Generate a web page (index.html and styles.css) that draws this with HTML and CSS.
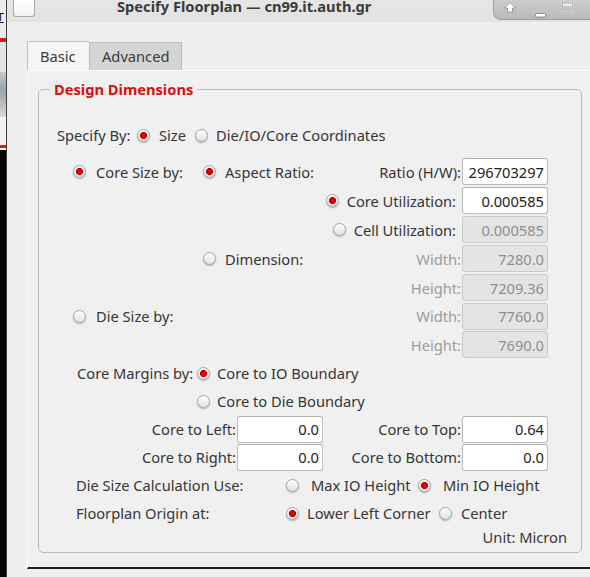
FILE: index.html
```html
<!DOCTYPE html>
<html>
<head>
<meta charset="utf-8">
<title>Specify Floorplan</title>
<link rel="stylesheet" href="styles.css">
</head>
<body>
<div class="screen">
  <div class="backwin">
    <div class="bw-top"><span class="bw-t">T</span></div>
    <div class="bw-red"></div>
    <div class="bw-gap"></div>
    <div class="bw-mid"></div>
    <div class="bw-light"></div>
    <div class="bw-dark"></div>
  </div>
  <div class="dialog">
    <div class="titlebar">
      <div class="tb-menu"></div>
      <div class="tb-title">Specify Floorplan — cn99.it.auth.gr</div>
      <div class="tb-buttons">
        <svg width="97" height="20" viewBox="0 0 97 20">
          <path d="M17 2.5 L22.5 8 L19.5 8 L19.5 12 L14.5 12 L14.5 8 L11.5 8 Z" fill="#fff" stroke="#8a8a8a" stroke-width="0.8" stroke-linejoin="round"/>
          <rect x="42.5" y="13.5" width="10" height="3.5" rx="1" fill="#fff" stroke="#777" stroke-width="0.8"/>
          <rect x="69.5" y="2.5" width="10" height="10" fill="none" stroke="#f4f4f4" stroke-width="1.6"/>
          <rect x="69.5" y="2.5" width="10" height="10" fill="none" stroke="#8a8a8a" stroke-width="0.6"/>
          <line x1="70" y1="5" x2="79" y2="5" stroke="#f4f4f4" stroke-width="1.4"/>
        </svg>
      </div>
    </div>
    <div class="body">
      <div class="tabs">
        <div class="tab active">Basic</div>
        <div class="tab">Advanced</div>
      </div>
      <div class="pane">
        <fieldset class="group">
          <legend>Design Dimensions</legend>

          <div class="row row-spec">
            <span class="spec-label">Specify By:</span>
            <span class="radio on"></span><span class="spec-size">Size</span>
            <span class="radio"></span><span class="spec-coord">Die/IO/Core Coordinates</span>
          </div>

          <div class="row row-dim h29">
            <span class="radio on"></span><span class="cellA">Core Size by:</span>
            <span class="radio on"></span><span class="cellB">Aspect Ratio:</span>
            <span class="flabel">Ratio (H/W):</span>
            <input class="field" type="text" value="296703297" readonly>
          </div>

          <div class="row row-dim h29">
            <span class="cellA-empty"></span>
            <span class="util"><span class="radio on"></span><span class="util-text">Core Utilization:</span></span>
            <input class="field" type="text" value="0.000585" readonly>
          </div>

          <div class="row row-dim h29">
            <span class="cellA-empty"></span>
            <span class="util"><span class="radio"></span><span class="util-text">Cell Utilization:</span></span>
            <input class="field" type="text" value="0.000585" disabled>
          </div>

          <div class="row row-dim h29">
            <span class="cellA-empty"></span>
            <span class="radio"></span><span class="cellB">Dimension:</span>
            <span class="flabel muted">Width:</span>
            <input class="field" type="text" value="7280.0" disabled>
          </div>

          <div class="row row-dim h29">
            <span class="cellA-empty"></span>
            <span class="cellB-empty"></span>
            <span class="flabel muted">Height:</span>
            <input class="field" type="text" value="7209.36" disabled>
          </div>

          <div class="row row-dim h28">
            <span class="radio"></span><span class="cellA">Die Size by:</span>
            <span class="cellB-empty"></span>
            <span class="flabel muted">Width:</span>
            <input class="field" type="text" value="7760.0" disabled>
          </div>

          <div class="row row-dim h29">
            <span class="cellA-empty"></span>
            <span class="cellB-empty"></span>
            <span class="flabel muted">Height:</span>
            <input class="field" type="text" value="7690.0" disabled>
          </div>

          <div class="row row-margin">
            <span class="margin-label">Core Margins by:</span>
            <span class="radio on"></span><span class="margin-opt">Core to IO Boundary</span>
          </div>

          <div class="row row-margin">
            <span class="margin-label"></span>
            <span class="radio"></span><span class="margin-opt">Core to Die Boundary</span>
          </div>

          <div class="row row-sides">
            <span class="side-label">Core to Left:</span>
            <input class="field" type="text" value="0.0" readonly>
            <span class="side-label2">Core to Top:</span>
            <input class="field" type="text" value="0.64" readonly>
          </div>

          <div class="row row-sides">
            <span class="side-label">Core to Right:</span>
            <input class="field" type="text" value="0.0" readonly>
            <span class="side-label2">Core to Bottom:</span>
            <input class="field" type="text" value="0.0" readonly>
          </div>

          <div class="row row-opt">
            <span class="opt-label">Die Size Calculation Use:</span>
            <span class="radio"></span><span class="opt-a1">Max IO Height</span>
            <span class="radio on"></span><span class="opt-b1">Min IO Height</span>
          </div>

          <div class="row row-opt">
            <span class="opt-label">Floorplan Origin at:</span>
            <span class="radio on"></span><span class="opt-a2">Lower Left Corner</span>
            <span class="radio"></span><span class="opt-b2">Center</span>
          </div>

          <div class="row row-unit">Unit: Micron</div>
        </fieldset>
      </div>
    </div>
  </div>
</div>
</body>
</html>
```

FILE: styles.css
```css
* { box-sizing: border-box; }
html, body { margin: 0; padding: 0; }
body {
  width: 590px;
  height: 577px;
  overflow: hidden;
  background: #efefef;
  font-family: "Noto Sans", "Open Sans", sans-serif;
  font-size: 11pt;
  color: #353535;
}
.screen { display: flex; height: 577px; }

/* window behind the dialog */
.backwin {
  width: 7px;
  flex: none;
  display: flex;
  flex-direction: column;
  border-right: 1px solid #3c3c3c;
  overflow: hidden;
}
.bw-top { height: 38px; background: #ebebeb; }
.bw-t {
  display: block;
  margin: 12px 0 0 -3px;
  font-family: "DejaVu Sans", sans-serif;
  font-size: 11px;
  line-height: 12px;
  color: #111;
  text-decoration: underline;
}
.bw-red { height: 4px; background: #cc1d1d; }
.bw-gap { height: 30px; background: #e4e4e4; }
.bw-mid { height: 45px; background: linear-gradient(#c4c8cc, #9aa3ad 40%, #d8d8d8); }
.bw-light { height: 33px; background: linear-gradient(#f2f2f2 85%, #cc2222 85%, #cc2222 95%, #ededed 95%); }
.bw-dark { flex: 1; background: #050505; }

.dialog { flex: 1; display: flex; flex-direction: column; min-width: 0; }

/* title bar */
.titlebar {
  height: 22px;
  flex: none;
  display: flex;
  align-items: flex-start;
  background: linear-gradient(#e6e6e6, #e2e2e2);
}
.tb-menu {
  width: 22px;
  height: 17px;
  margin-left: 6px;
  border: 1px solid #a8a8a8;
  border-top: none;
  border-radius: 0 0 3px 3px;
  background: linear-gradient(#ffffff, #f1f1f1);
}
.tb-title {
  margin-left: 82px;
  margin-top: -4px;
  font-weight: bold;
  font-size: 11pt;
  line-height: 20px;
  color: #3a3a3a;
  white-space: nowrap;
}
.tb-buttons {
  margin-left: auto;
  width: 97px;
  height: 20px;
  border: 1px solid #9d9d9d;
  border-top: none;
  border-right: none;
  border-radius: 0 0 0 8px;
  background: linear-gradient(#cdcdcd, #b9b9b9);
  overflow: hidden;
}
.tb-buttons svg { display: block; margin-left: -1px; }

/* body with tabs */
.body { flex: 1; padding: 19px 0 0 20px; display: flex; flex-direction: column; }
.tabs { display: flex; height: 29px; align-items: flex-end; }
.tab {
  height: 28px;
  padding: 0 12px;
  border: 1px solid #bdbdbd;
  border-bottom: none;
  line-height: 27px;
  background: #d5d5d5;
  color: #3a3a3a;
}
.tab.active {
  height: 29px;
  width: 62px;
  background: #f6f6f6;
  border-right: none;
  line-height: 29px;
}
.tab + .tab { width: 93px; }

.pane {
  height: 499px;
  flex: none;
  background: #f0f0f0;
  border-top: 1px solid #fcfcfc;
  border-left: 1px solid #fcfcfc;
  border-bottom: 2px solid #1e1e1e;
  padding: 8px 0 0 10px;
}

/* group box */
.group {
  margin: 0;
  width: 544px;
  padding: 0 0 5px 0;
  border: 1px solid #b9b9b9;
  border-radius: 5px;
}
.group legend {
  margin-left: 11px;
  padding: 0 4px;
  font-weight: bold;
  font-size: 11pt;
  line-height: 20px;
  color: #d7100f;
}

.row { display: flex; align-items: center; height: 28px; white-space: nowrap; }
.h29 { height: 29px; }
.h28 { height: 28px; }

/* radio buttons */
.radio {
  width: 13px;
  height: 13px;
  flex: none;
  border-radius: 50%;
  border: 1px solid #a5a5a5;
  background: linear-gradient(#ffffff, #e1e1e1);
  box-shadow: 0 1px 1.5px rgba(0, 0, 0, 0.28);
}
.radio.on {
  background:
    radial-gradient(circle at 50% 50%, #ee0000 0, #e00000 2.2px, #a80000 3.2px, rgba(168, 0, 0, 0) 3.8px),
    linear-gradient(#ffffff, #e1e1e1);
}

/* Specify By row */
.row-spec { margin-top: 22px; margin-bottom: 8px; padding-left: 18px; }
.spec-label { width: 80px; flex: none; }
.spec-size { width: 36px; flex: none; margin-left: 9px; }
.spec-coord { margin-left: 8px; }

/* dimension rows */
.row-dim { padding-left: 34px; padding-right: 33px; }
.cellA { width: 107px; flex: none; margin-left: 10px; }
.cellA-empty { width: 130px; flex: none; }
.cellB { flex: 1; margin-left: 9px; }
.cellB-empty { flex: 1; }
.flabel { flex: none; margin-right: 1px; }
.muted { color: #9d9d9d; }
.util { flex: 1; display: flex; align-items: center; justify-content: flex-end; margin-right: 6px; }
.util-text { margin-left: 8px; }

.field {
  width: 86px;
  height: 27px;
  flex: none;
  margin: 0;
  padding: 0 3px 0 2px;
  border: 1px solid #bcbcbc;
  border-top-color: #b0b0b0;
  border-radius: 3px;
  background: #ffffff;
  font: inherit;
  color: #222;
  text-align: right;
  outline: none;
}
.field:disabled { background: #e4e4e4; color: #8e8e8e; border-color: #c9c9c9; }

/* margins */
.row-margin { padding-left: 38px; }
.margin-label { width: 120px; flex: none; }
.margin-opt { margin-left: 7px; }

.row-sides { padding-right: 33px; }
.side-label { width: 198px; flex: none; text-align: right; padding-right: 1px; }
.side-label2 { flex: 1; text-align: right; padding-right: 1px; }

/* options */
.row-opt { padding-left: 37px; }
.opt-label { width: 210px; flex: none; }
.opt-a1 { width: 107px; flex: none; margin-left: 12px; }
.opt-b1 { margin-left: 12px; }
.opt-a2 { width: 132px; flex: none; margin-left: 8px; }
.opt-b2 { margin-left: 9px; }

.row-unit { height: 20px; justify-content: flex-end; padding-right: 14px; }
```
